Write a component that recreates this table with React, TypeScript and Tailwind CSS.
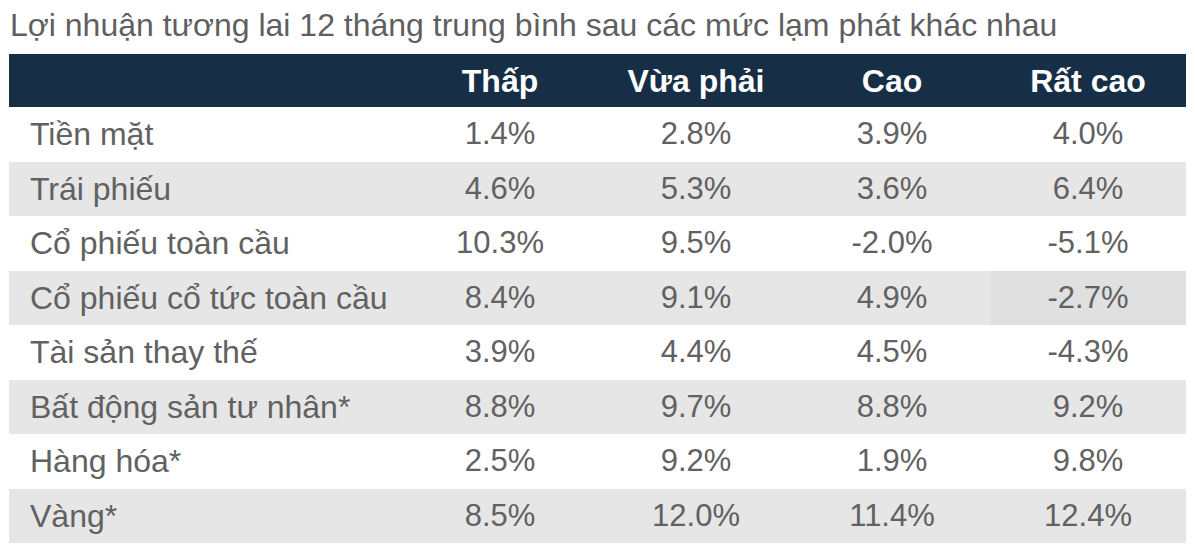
const headers = ['Thấp', 'Vừa phải', 'Cao', 'Rất cao']

const rows: { label: string; values: string[] }[] = [
  { label: 'Tiền mặt', values: ['1.4%', '2.8%', '3.9%', '4.0%'] },
  { label: 'Trái phiếu', values: ['4.6%', '5.3%', '3.6%', '6.4%'] },
  { label: 'Cổ phiếu toàn cầu', values: ['10.3%', '9.5%', '-2.0%', '-5.1%'] },
  { label: 'Cổ phiếu cổ tức toàn cầu', values: ['8.4%', '9.1%', '4.9%', '-2.7%'] },
  { label: 'Tài sản thay thế', values: ['3.9%', '4.4%', '4.5%', '-4.3%'] },
  { label: 'Bất động sản tư nhân*', values: ['8.8%', '9.7%', '8.8%', '9.2%'] },
  { label: 'Hàng hóa*', values: ['2.5%', '9.2%', '1.9%', '9.8%'] },
  { label: 'Vàng*', values: ['8.5%', '12.0%', '11.4%', '12.4%'] },
]

export default function App() {
  return (
    <div className="h-[552px] w-[1195px] overflow-hidden bg-white font-['Liberation_Sans',Arial,sans-serif]">
      <h1 className="pl-[10px] pt-[6px] text-[32px] leading-[38px] text-[#5f5f5f]">
        Lợi nhuận tương lai 12 tháng trung bình sau các mức lạm phát khác nhau
      </h1>
      <div className="ml-[9px] mt-[10px] w-[1177px]">
        <div className="grid h-[53px] grid-cols-[393px_196px_196px_196px_196px] items-center bg-[#172e47] text-[32px] font-bold text-white">
          <div />
          {headers.map((h) => (
            <div key={h} className="text-center">
              {h}
            </div>
          ))}
        </div>
        {rows.map((row, i) => (
          <div
            key={row.label}
            className={`grid h-[54.5px] grid-cols-[393px_196px_196px_196px_196px] items-center text-[32px] text-[#616161] ${
              i % 2 === 1 ? 'bg-[#e6e6e6]' : 'bg-white'
            }`}
          >
            <div className="pl-[21px]">{row.label}</div>
            {row.values.map((v, j) => (
              <div
                key={j}
                className={`flex h-full items-center justify-center text-[31px] ${
                  i === 3 && j === 3 ? 'bg-[#e0e0e0]' : ''
                }`}
              >
                {v}
              </div>
            ))}
          </div>
        ))}
      </div>
    </div>
  )
}
